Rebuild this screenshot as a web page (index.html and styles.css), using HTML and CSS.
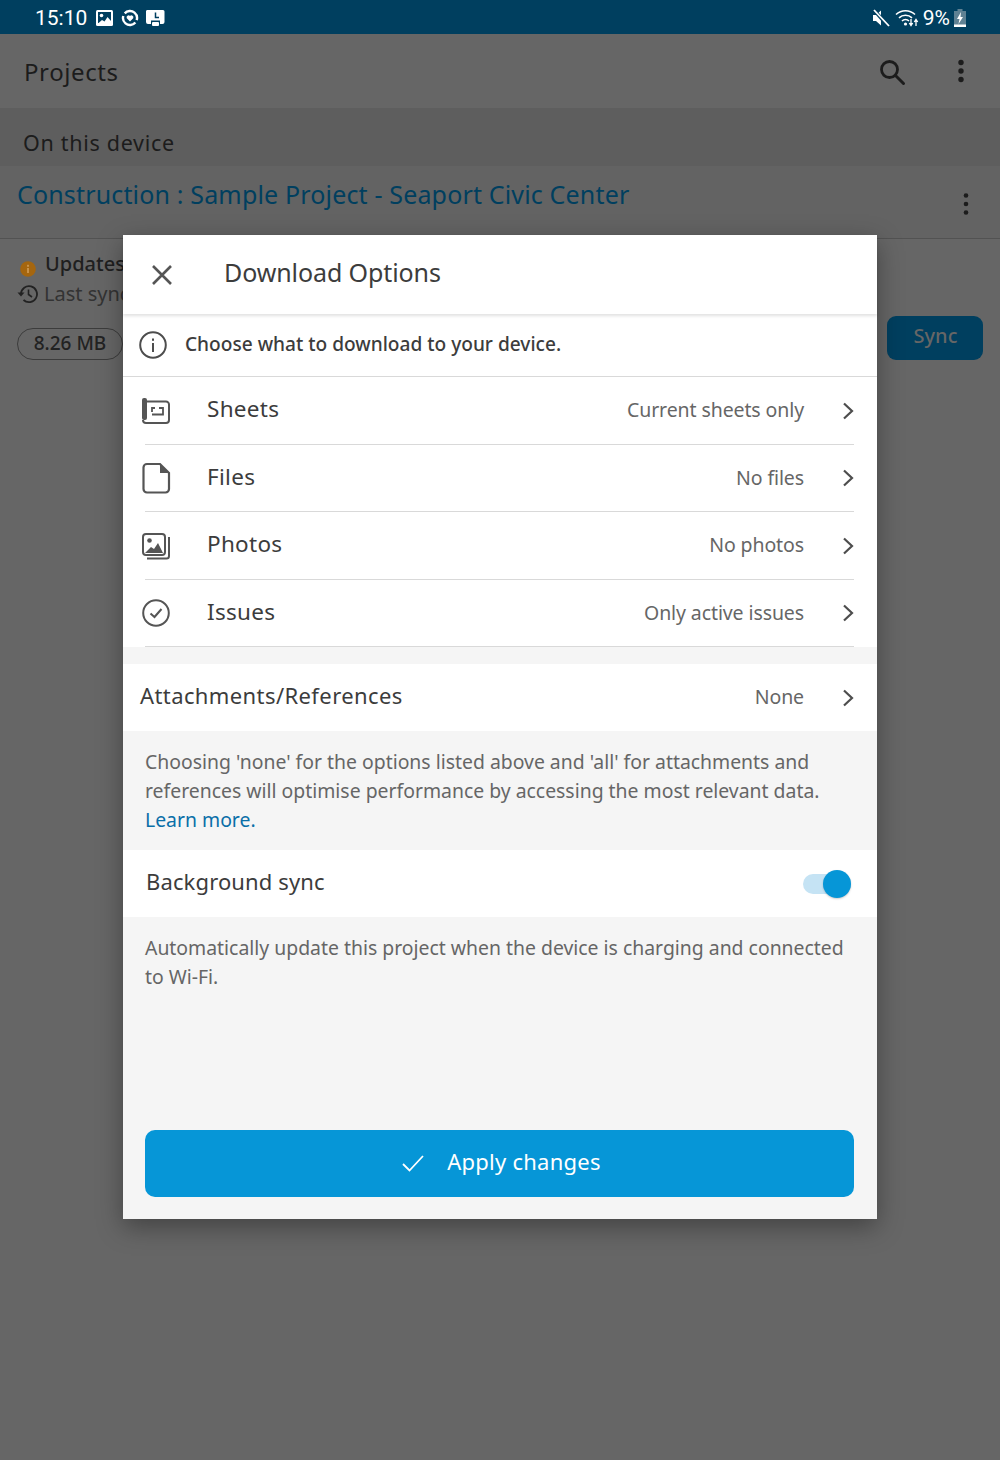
FILE: index.html
```html
<!DOCTYPE html>
<html lang="en">
<head>
    <meta charset="UTF-8">
    <title>Download Options</title>
    <link rel="stylesheet" href="styles.css">
</head>
<body>
    <div class="status-bar">
        <div class="status-left">
            <span class="clock">15:10</span>
            <svg width="17" height="16" viewBox="0 0 17 16"><rect width="17" height="16" rx="1.500" fill="#fff"/><rect x="2" y="2" width="13" height="11" fill="#003f5f"/><circle cx="5.500" cy="5.500" r="1.800" fill="#fff"/><path d="M2 13.500l4-3.500 2.500 1.500 3-4.500 3.500 4v2.500z" fill="#fff"/></svg>
            <svg width="18" height="18" viewBox="0 0 18 18"><circle cx="9" cy="9" r="7" fill="none" stroke="#fff" stroke-width="2.400" stroke-dasharray="19 3" transform="rotate(40 9 9)"/><path d="M9 12.500L5.800 9.200a2 2 0 0 1 3.200-2.300 2 2 0 0 1 3.200 2.300z" fill="#fff"/></svg>
            <svg width="19" height="16" viewBox="0 0 19 16"><path d="M2 0h15a1.500 1.500 0 0 1 1.500 1.500V12a2 2 0 0 1-2 2h-2.500v-3.500h-9V14H2a2 2 0 0 1-2-2V1.500A1.500 1.500 0 0 1 2 0z" fill="#fff"/><rect x="6" y="12" width="7" height="4" rx="1" fill="#fff"/><path d="M9.500 2.500v5h3.500" fill="none" stroke="#003f5f" stroke-width="1.500"/></svg>
        </div>
        <div class="status-right">
            <svg width="18" height="18" viewBox="0 0 18 18"><path d="M1 6h3l5-4.500v15L4 12H1z" fill="#fff"/><path d="M2 1l14 16" stroke="#003f5f" stroke-width="3.500"/><path d="M2 1l15 16" stroke="#fff" stroke-width="1.800"/></svg>
            <svg width="24" height="20" viewBox="0 0 24 20"><g fill="none" stroke="#fff" stroke-width="1.600"><path d="M1 6.500a14 14 0 0 1 19 0"/><path d="M4 9.800a9.500 9.500 0 0 1 13 0"/><path d="M7 13a5 5 0 0 1 7 0"/></g><circle cx="10.500" cy="16" r="1.600" fill="#fff"/><path d="M16 11v6M14.300 15l1.700 2.500 1.700-2.500M21 18v-6M19.300 14l1.700-2.500 1.700 2.500" fill="none" stroke="#fff" stroke-width="1.300"/></svg>
            <span class="battery-pct">9%</span>
            <svg width="12" height="18" viewBox="0 0 12 18"><path d="M3.500 0h5v2H12v16H0V2h3.500z" fill="#5f8193"/><rect y="15.500" width="12" height="2.500" fill="#fff"/><path d="M7 3L3 10h2.500L4.500 15 9 8H6.500z" fill="#fff"/></svg>
        </div>
    </div>

    <header class="app-bar">
        <span class="app-title">Projects</span>
        <div class="app-actions">
            <svg class="search-icon" width="28" height="28" viewBox="0 0 28 28"><circle cx="11.500" cy="11.500" r="8" fill="none" stroke="#1c1c1c" stroke-width="2.800"/><path d="M17.500 17.500l8 8" stroke="#1c1c1c" stroke-width="3" stroke-linecap="round"/></svg>
            <svg class="dots" width="6" height="24" viewBox="0 0 6 24"><circle cx="3" cy="3.500" r="2.700" fill="#1c1c1c"/><circle cx="3" cy="12" r="2.700" fill="#1c1c1c"/><circle cx="3" cy="20.500" r="2.700" fill="#1c1c1c"/></svg>
        </div>
    </header>

    <div class="section-label">On this device</div>

    <div class="project-row">
        <span class="project-name">Construction : Sample Project - Seaport Civic Center</span>
        <svg class="project-dots" width="6" height="24" viewBox="0 0 6 24"><circle cx="3" cy="3.500" r="2.300" fill="#1c1c1c"/><circle cx="3" cy="12" r="2.300" fill="#1c1c1c"/><circle cx="3" cy="20.500" r="2.300" fill="#1c1c1c"/></svg>
    </div>

    <div class="project-detail">
        <div class="detail-info">
            <div class="detail-line">
                <svg class="updates-icon" width="16" height="16" viewBox="0 0 16 16"><circle cx="8" cy="8" r="7.800" fill="#a5660f"/><rect x="7" y="7" width="2" height="5" fill="#c8924a"/><rect x="7" y="3.800" width="2" height="2" fill="#c8924a"/></svg>
                <span class="detail-strong">Updates available</span>
            </div>
            <div class="detail-line">
                <svg class="sync-icon" width="22" height="20" viewBox="0 0 22 20"><path d="M5 10a8 8 0 1 1 2.500 6" fill="none" stroke="#222" stroke-width="1.800"/><path d="M1.500 8.500L5 12.500 8.500 8.500z" fill="#222"/><path d="M12.500 5.500v5l3.500 2.500" fill="none" stroke="#222" stroke-width="1.600"/></svg>
                <span class="detail-muted">Last synced today</span>
            </div>
            <div class="size-pill">8.26 MB</div>
        </div>
        <div class="sync-btn">Sync</div>
    </div>

    <div class="modal">
        <div class="modal-head">
            <svg class="close-icon" width="22" height="22" viewBox="0 0 22 22"><path d="M2 2l18 18M20 2L2 20" stroke="#555" stroke-width="2.600"/></svg>
            <span class="modal-title">Download Options</span>
        </div>
        <div class="modal-note">
            <svg width="30" height="30" viewBox="0 0 30 30"><circle cx="15" cy="15" r="12.800" fill="none" stroke="#4d4d4d" stroke-width="2"/><rect x="14" y="13" width="2" height="9" fill="#4d4d4d"/><rect x="14" y="8.500" width="2" height="2.300" fill="#4d4d4d"/></svg>
            <span class="note-text">Choose what to download to your device.</span>
        </div>

        <div class="option">
            <svg class="option-icon" width="30" height="28" viewBox="0 0 30 28"><path d="M6 4.500h19a3 3 0 0 1 3 3V23a3 3 0 0 1-3 3H5a3 3 0 0 1-3-3" fill="none" stroke="#555" stroke-width="2"/><rect x="1" y="1" width="5" height="22" rx="2" fill="#555"/><path d="M11 15v-4h3M18 11h4v6.500H11" fill="none" stroke="#555" stroke-width="1.800"/></svg>
            <span class="option-name">Sheets</span>
            <span class="option-value">Current sheets only</span>
            <svg class="chevron" width="12" height="18" viewBox="0 0 12 18"><path d="M2 1.500L10 9l-8 7.500" fill="none" stroke="#4d4d4d" stroke-width="2.200"/></svg>
        </div>
        <div class="option">
            <svg class="option-icon" width="30" height="32" viewBox="0 0 30 32"><path d="M6 2h13l9 9v16a3.500 3.500 0 0 1-3.500 3.500H6A3.500 3.500 0 0 1 2.500 27V5.500A3.500 3.500 0 0 1 6 2z" fill="none" stroke="#555" stroke-width="2.200"/><path d="M19 2l9 9h-9z" fill="#555"/></svg>
            <span class="option-name">Files</span>
            <span class="option-value">No files</span>
            <svg class="chevron" width="12" height="18" viewBox="0 0 12 18"><path d="M2 1.500L10 9l-8 7.500" fill="none" stroke="#4d4d4d" stroke-width="2.200"/></svg>
        </div>
        <div class="option">
            <svg class="option-icon" width="30" height="28" viewBox="0 0 30 28"><rect x="2" y="2" width="22" height="21" rx="3" fill="none" stroke="#555" stroke-width="2"/><path d="M28 5v19a2.500 2.500 0 0 1-2.500 2.500H6" fill="none" stroke="#555" stroke-width="2"/><circle cx="8.500" cy="8.500" r="2.300" fill="#555"/><path d="M4 21l6-6 3 2 4-6 5 10z" fill="#555"/></svg>
            <span class="option-name">Photos</span>
            <span class="option-value">No photos</span>
            <svg class="chevron" width="12" height="18" viewBox="0 0 12 18"><path d="M2 1.500L10 9l-8 7.500" fill="none" stroke="#4d4d4d" stroke-width="2.200"/></svg>
        </div>
        <div class="option">
            <svg class="option-icon" width="30" height="30" viewBox="0 0 30 30"><circle cx="15" cy="15" r="12.800" fill="none" stroke="#555" stroke-width="2"/><path d="M9.500 15.500l4 3.500 7-8" fill="none" stroke="#555" stroke-width="2"/></svg>
            <span class="option-name">Issues</span>
            <span class="option-value">Only active issues</span>
            <svg class="chevron" width="12" height="18" viewBox="0 0 12 18"><path d="M2 1.500L10 9l-8 7.500" fill="none" stroke="#4d4d4d" stroke-width="2.200"/></svg>
        </div>

        <div class="attach-row">
            <span class="attach-name">Attachments/References</span>
            <span class="option-value">None</span>
            <svg class="chevron" width="12" height="18" viewBox="0 0 12 18"><path d="M2 1.500L10 9l-8 7.500" fill="none" stroke="#4d4d4d" stroke-width="2.200"/></svg>
        </div>
        <p class="help-text attach-help">Choosing 'none' for the options listed above and 'all' for attachments and references will optimise performance by accessing the most relevant data. <a class="learn-more">Learn more.</a></p>

        <div class="sync-row">
            <span class="sync-name">Background sync</span>
            <div class="toggle"><div class="toggle-knob"></div></div>
        </div>
        <p class="help-text sync-help">Automatically update this project when the device is charging and connected to Wi-Fi.</p>

        <div class="apply-btn">
            <svg class="apply-icon" width="24" height="18" viewBox="0 0 24 18"><path d="M2 10l6.500 6.500L22 2" fill="none" stroke="#fff" stroke-width="1.800"/></svg>
            <span class="apply-label">Apply changes</span>
        </div>
    </div>
</body>
</html>
```

FILE: styles.css
```css
* {
    box-sizing: border-box;
}
body {
    font-family: "Noto Sans", Arial, sans-serif;
    margin: 0;
    padding: 0;
    width: 1000px;
    height: 1460px;
    overflow: hidden;
    position: relative;
    background-color: #666;
    color: #1f1f1f;
}
.status-bar {
    height: 34px;
    background: #003f5f;
    color: white;
    display: flex;
    justify-content: space-between;
    align-items: center;
    padding: 2px 34px 0 35px;
}
.status-left, .status-right {
    display: flex;
    align-items: center;
}
.status-left {
    gap: 8px;
}
.status-left svg:last-child {
    margin-left: -1px;
}
.status-right {
    gap: 4px;
}
.status-right svg:first-child {
    margin-right: 1px;
}
.clock {
    font-family: Roboto, sans-serif;
    font-size: 21px;
    margin-right: 1px;
}
.battery-pct {
    font-family: Roboto, sans-serif;
    font-size: 21px;
}
.app-bar {
    height: 74px;
    display: flex;
    justify-content: space-between;
    align-items: center;
    padding: 0 36px 0 24px;
}
.app-title {
    font-size: 24px;
    letter-spacing: 0.6px;
    color: #1c1c1c;
}
.app-actions {
    display: flex;
    align-items: center;
    gap: 52px;
}
.search-icon {
    margin-top: 2px;
}
.section-label {
    height: 58px;
    background: #5e5e5e;
    padding: 20px 0 0 23px;
    font-size: 21.500px;
    line-height: 30px;
    letter-spacing: 0.7px;
    color: #1c1c1c;
}
.project-row {
    height: 73px;
    padding: 11px 31px 0 17px;
    border-bottom: 1px solid #525252;
    display: flex;
    justify-content: space-between;
    background: #636363;
}
.project-name {
    font-size: 25px;
    line-height: 34px;
    letter-spacing: 0.16px;
    color: #003f5f;
}
.project-dots {
    margin-top: 15px;
}
.project-detail {
    display: flex;
    justify-content: space-between;
    padding: 10px 17px 0 16px;
}
.detail-line {
    display: flex;
    align-items: center;
    gap: 6px;
    height: 29px;
    white-space: nowrap;
    font-size: 20px;
}
.detail-line + .detail-line {
    margin-top: 1px;
}
.updates-icon {
    margin: 10px 3px 0 4px;
}
.detail-strong {
    font-weight: 500;
    color: #1f1f1f;
}
.detail-muted {
    color: #333;
}
.size-pill {
    width: 106px;
    height: 32px;
    margin: 20px 0 0 1px;
    border: 1px solid #3c3c3c;
    border-radius: 16px;
    text-align: center;
    font-size: 19px;
    font-weight: 500;
    line-height: 29px;
    color: #222;
}
.sync-btn {
    width: 96px;
    height: 44px;
    margin-top: 67px;
    background: #003f5f;
    border-radius: 9px;
    padding-left: 1px;
    text-align: center;
    font-size: 20px;
    font-weight: 500;
    line-height: 40px;
    color: #666;
}
.modal {
    position: absolute;
    left: 123px;
    top: 235px;
    width: 754px;
    height: 984px;
    background: #f5f5f5;
    box-shadow: 0 8px 24px rgba(0, 0, 0, 0.35);
    color: #3c3c3c;
}
.modal-head {
    height: 79px;
    background: white;
    display: flex;
    align-items: center;
    padding-left: 28px;
    box-shadow: 0 2px 3px rgba(0, 0, 0, 0.12);
    position: relative;
}
.modal-title {
    font-size: 25px;
    margin: 0 0 6px 51px;
    letter-spacing: -0.1px;
}
.modal-note {
    height: 63px;
    background: white;
    border-bottom: 1px solid #d9d9d9;
    display: flex;
    align-items: center;
    gap: 17px;
    padding-left: 15px;
}
.note-text {
    font-size: 19.100px;
    font-weight: 500;
    margin-bottom: 2px;
}
.option {
    height: 67.500px;
    background: white;
    display: flex;
    align-items: center;
    padding: 0 23px 0 18px;
    position: relative;
}
.option::after {
    content: "";
    position: absolute;
    left: 22px;
    right: 23px;
    bottom: 0;
    height: 1px;
    background: #d9d9d9;
}
.option-icon {
    width: 30px;
    flex: none;
}
.option-name {
    font-size: 22.500px;
    letter-spacing: 0.3px;
    margin: 0 0 4px 36px;
}
.option-value {
    margin: 0 38px 2px auto;
    font-size: 19.500px;
    letter-spacing: -0.1px;
    color: #666;
}
.attach-row {
    height: 67px;
    margin-top: 17px;
    background: white;
    display: flex;
    align-items: center;
    padding: 0 23px 0 17px;
}
.attach-name {
    font-size: 22px;
    letter-spacing: 0.4px;
    margin-bottom: 6px;
}
.help-text {
    margin: 0;
    padding: 16px 22px 0;
    font-size: 19.400px;
    line-height: 29px;
    color: #666;
}
.attach-help {
    height: 119px;
}
.learn-more {
    color: #0a6fa8;
}
.sync-row {
    height: 67px;
    background: white;
    display: flex;
    align-items: center;
    justify-content: space-between;
    padding: 0 26px 0 23px;
}
.sync-name {
    font-size: 22px;
    letter-spacing: 0.13px;
    margin-bottom: 6px;
}
.toggle {
    width: 48px;
    height: 20px;
    background: #c5e3f4;
    border-radius: 10px;
    position: relative;
}
.toggle-knob {
    position: absolute;
    right: 0;
    top: -4px;
    width: 28px;
    height: 28px;
    border-radius: 50%;
    background: #0696d7;
    box-shadow: 0 1px 2px rgba(0, 0, 0, 0.2);
}
.sync-help {
    height: 213px;
}
.apply-btn {
    margin: 0 23px 0 22px;
    height: 67px;
    padding-left: 3px;
    background: #0696d7;
    border-radius: 10px;
    display: flex;
    align-items: center;
    justify-content: center;
    gap: 22px;
    color: white;
}
.apply-icon {
    margin-bottom: 1px;
}
.apply-label {
    font-size: 22px;
    letter-spacing: 0.25px;
    margin-bottom: 6px;
}
```
